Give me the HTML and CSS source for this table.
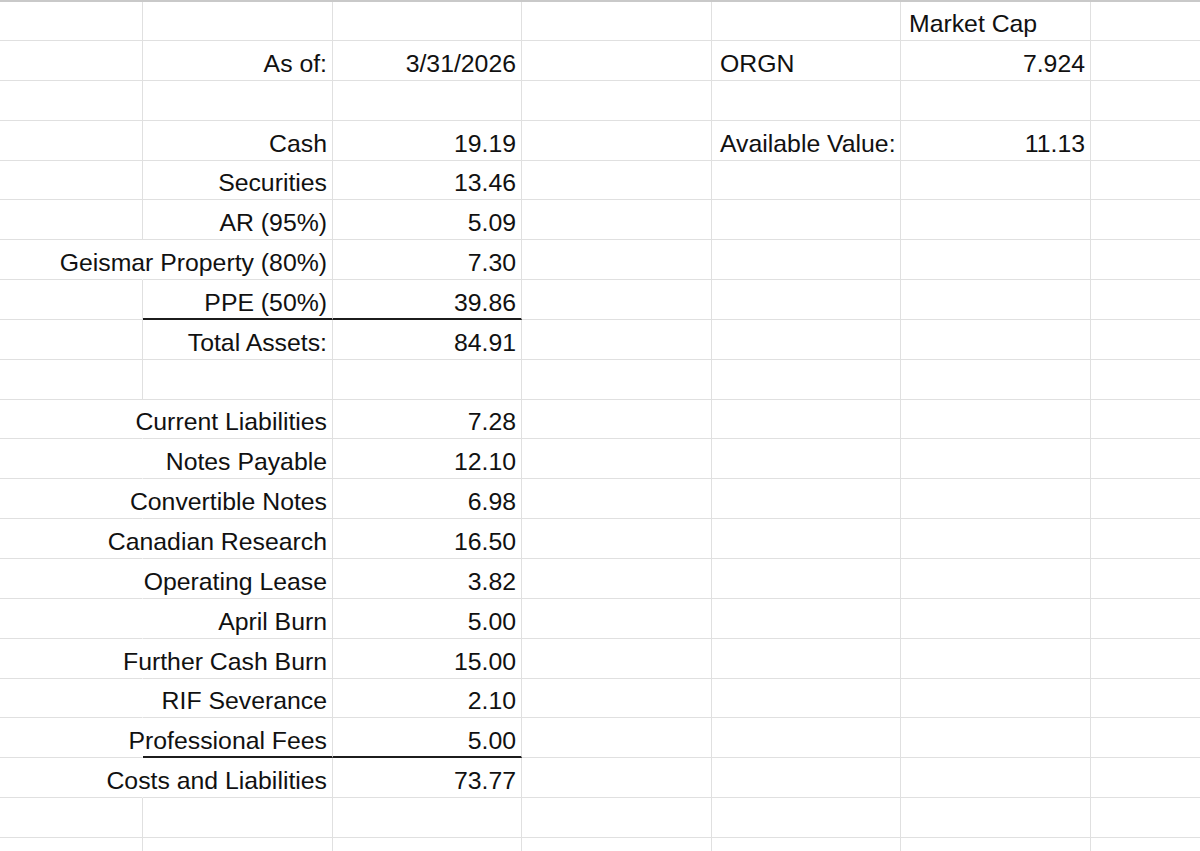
FILE: index.html
```html
<!DOCTYPE html>
<html lang="en">
<head>
<meta charset="utf-8">
<title>ORGN</title>
<link rel="stylesheet" href="styles.css">
</head>
<body>
<div class="sheet">
  <div class="row first">
    <div class="c"></div><div class="c"></div><div class="c"></div><div class="c"></div><div class="c"></div><div class="c l">Market Cap</div><div class="c"></div>
  </div>
  <div class="row">
    <div class="c"></div><div class="c r">As of:</div><div class="c r">3/31/2026</div><div class="c"></div><div class="c l">ORGN</div><div class="c r">7.924</div><div class="c"></div>
  </div>
  <div class="row">
    <div class="c"></div><div class="c"></div><div class="c"></div><div class="c"></div><div class="c"></div><div class="c"></div><div class="c"></div>
  </div>
  <div class="row">
    <div class="c"></div><div class="c r">Cash</div><div class="c r">19.19</div><div class="c"></div><div class="c l">Available Value:</div><div class="c r">11.13</div><div class="c"></div>
  </div>
  <div class="row">
    <div class="c"></div><div class="c r">Securities</div><div class="c r">13.46</div><div class="c"></div><div class="c"></div><div class="c"></div><div class="c"></div>
  </div>
  <div class="row">
    <div class="c"></div><div class="c r">AR (95%)</div><div class="c r">5.09</div><div class="c"></div><div class="c"></div><div class="c"></div><div class="c"></div>
  </div>
  <div class="row">
    <div class="c open"></div><div class="c r">Geismar Property (80%)</div><div class="c r">7.30</div><div class="c"></div><div class="c"></div><div class="c"></div><div class="c"></div>
  </div>
  <div class="row">
    <div class="c"></div><div class="c r total">PPE (50%)</div><div class="c r total">39.86</div><div class="c"></div><div class="c"></div><div class="c"></div><div class="c"></div>
  </div>
  <div class="row">
    <div class="c"></div><div class="c r">Total Assets:</div><div class="c r">84.91</div><div class="c"></div><div class="c"></div><div class="c"></div><div class="c"></div>
  </div>
  <div class="row">
    <div class="c"></div><div class="c"></div><div class="c"></div><div class="c"></div><div class="c"></div><div class="c"></div><div class="c"></div>
  </div>
  <div class="row">
    <div class="c open"></div><div class="c r">Current Liabilities</div><div class="c r">7.28</div><div class="c"></div><div class="c"></div><div class="c"></div><div class="c"></div>
  </div>
  <div class="row">
    <div class="c open"></div><div class="c r">Notes Payable</div><div class="c r">12.10</div><div class="c"></div><div class="c"></div><div class="c"></div><div class="c"></div>
  </div>
  <div class="row">
    <div class="c open"></div><div class="c r">Convertible Notes</div><div class="c r">6.98</div><div class="c"></div><div class="c"></div><div class="c"></div><div class="c"></div>
  </div>
  <div class="row">
    <div class="c open"></div><div class="c r">Canadian Research</div><div class="c r">16.50</div><div class="c"></div><div class="c"></div><div class="c"></div><div class="c"></div>
  </div>
  <div class="row">
    <div class="c open"></div><div class="c r">Operating Lease</div><div class="c r">3.82</div><div class="c"></div><div class="c"></div><div class="c"></div><div class="c"></div>
  </div>
  <div class="row">
    <div class="c open"></div><div class="c r">April Burn</div><div class="c r">5.00</div><div class="c"></div><div class="c"></div><div class="c"></div><div class="c"></div>
  </div>
  <div class="row">
    <div class="c open"></div><div class="c r">Further Cash Burn</div><div class="c r">15.00</div><div class="c"></div><div class="c"></div><div class="c"></div><div class="c"></div>
  </div>
  <div class="row">
    <div class="c open"></div><div class="c r">RIF Severance</div><div class="c r">2.10</div><div class="c"></div><div class="c"></div><div class="c"></div><div class="c"></div>
  </div>
  <div class="row">
    <div class="c open"></div><div class="c r total">Professional Fees</div><div class="c r total">5.00</div><div class="c"></div><div class="c"></div><div class="c"></div><div class="c"></div>
  </div>
  <div class="row">
    <div class="c open"></div><div class="c r">Costs and Liabilities</div><div class="c r">73.77</div><div class="c"></div><div class="c"></div><div class="c"></div><div class="c"></div>
  </div>
  <div class="row">
    <div class="c"></div><div class="c"></div><div class="c"></div><div class="c"></div><div class="c"></div><div class="c"></div><div class="c"></div>
  </div>
  <div class="row">
    <div class="c"></div><div class="c"></div><div class="c"></div><div class="c"></div><div class="c"></div><div class="c"></div><div class="c"></div>
  </div>
</div>
</body>
</html>
```

FILE: styles.css
```css
html, body {
  margin: 0;
  padding: 0;
  background: #ffffff;
}

body {
  width: 1200px;
  height: 851px;
  overflow: hidden;
  font-family: "Liberation Sans", Arial, sans-serif;
  font-size: 24.8px;
  color: #111111;
}

.sheet {
  border-top: 2px solid #c9c9c9;
}

.row {
  display: grid;
  grid-template-columns: 143px 190px 189px 190px 189px 190px 1fr;
  height: 39.85px;
}

.row.first {
  height: 39px;
}

.c {
  box-sizing: border-box;
  display: flex;
  align-items: flex-end;
  min-width: 0;
  white-space: nowrap;
  line-height: 27px;
  padding: 0 5px 3px 8px;
  border-right: 1px solid #e0e0e0;
  border-bottom: 1px solid #e0e0e0;
}

.c:last-child {
  border-right: none;
}

.c.r {
  justify-content: flex-end;
  padding-left: 0;
}

.c.l {
  justify-content: flex-start;
}

.c.open {
  border-right-color: transparent;
}

.c.total {
  border-bottom: 2px solid #1c1c1c;
  padding-bottom: 2px;
}
```
